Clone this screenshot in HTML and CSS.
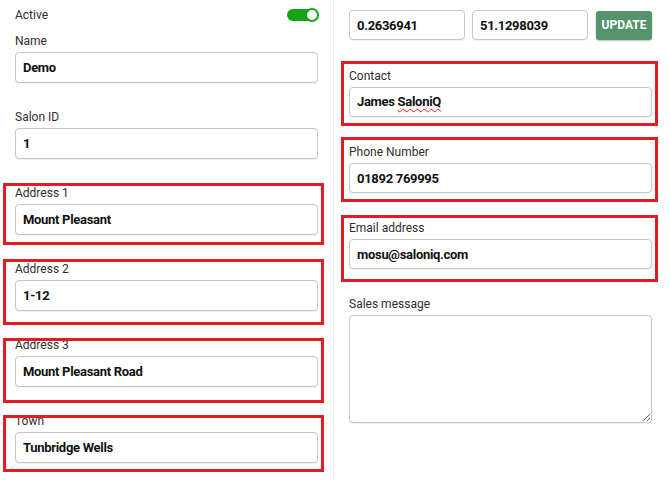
FILE: index.html
```html
<!DOCTYPE html>
<html>
<head>
    <title>Salon Details</title>
    <link rel="stylesheet" href="styles.css">
</head>
<body>
    <div class="salon-form">
        <div class="col col-left">
            <div class="active-row">
                <span class="label">Active</span>
                <span class="toggle"><span class="knob"></span></span>
            </div>

            <div class="field">
                <label>Name</label>
                <input type="text" value="Demo">
            </div>

            <div class="field">
                <label>Salon ID</label>
                <input type="text" value="1">
            </div>

            <div class="field mark mark-a1">
                <label>Address 1</label>
                <input type="text" value="Mount Pleasant">
            </div>

            <div class="field mark mark-a2">
                <label>Address 2</label>
                <input type="text" value="1-12">
            </div>

            <div class="field mark mark-a3">
                <label>Address 3</label>
                <input type="text" value="Mount Pleasant Road">
            </div>

            <div class="field mark mark-town">
                <label>Town</label>
                <input type="text" value="Tunbridge Wells">
            </div>
        </div>

        <div class="col col-right">
            <div class="coords">
                <input type="text" value="0.2636941">
                <input type="text" value="51.1298039">
                <button class="update-btn">UPDATE</button>
            </div>

            <div class="field mark mark-r mark-contact">
                <label>Contact</label>
                <div class="input">James <span class="misspelt">SaloniQ</span></div>
            </div>

            <div class="field mark mark-r mark-phone">
                <label>Phone Number</label>
                <input type="text" value="01892 769995">
            </div>

            <div class="field mark mark-r mark-email">
                <label>Email address</label>
                <input type="text" value="mosu@saloniq.com">
            </div>

            <div class="field">
                <label>Sales message</label>
                <textarea></textarea>
            </div>
        </div>
    </div>
</body>
</html>
```

FILE: styles.css
```css
body {
    margin: 0;
    background: #fff;
    font-family: Roboto, 'Liberation Sans', Arial, sans-serif;
    color: #333;
    overflow: hidden;
}
.salon-form {
    display: grid;
    grid-template-columns: 334px 1fr;
    height: 480px;
}
.col {
    box-sizing: border-box;
}
.col-left {
    padding: 8px 15px 0 15px;
    border-right: 1px solid #ececec;
}
.col-right {
    padding: 10px 18px 0 15px;
}
.active-row {
    display: flex;
    justify-content: space-between;
    align-items: center;
    height: 14px;
    margin-bottom: 12px;
}
.label, label {
    display: block;
    font-size: 12px;
    line-height: 14px;
    color: #2e2e2e;
}
label {
    margin-bottom: 4px;
}
.toggle {
    position: relative;
    width: 31px;
    height: 12px;
    border-radius: 6px;
    background: #16a316;
}
.toggle .knob {
    position: absolute;
    right: -1px;
    top: -1px;
    width: 14px;
    height: 14px;
    border-radius: 50%;
    background: #fff;
    border: 2px solid #16a316;
    box-sizing: border-box;
}
.field {
    position: relative;
    margin-bottom: 28px;
}
input, .input, textarea {
    display: block;
    width: 100%;
    height: 31px;
    box-sizing: border-box;
    padding: 0 7px;
    border: 1px solid #c6c6c6;
    border-radius: 4px;
    box-shadow: 0 1px 1px rgba(0, 0, 0, 0.06);
    background: #fff;
    font-family: Roboto, 'Liberation Sans', Arial, sans-serif;
    font-size: 13px;
    font-weight: bold;
    letter-spacing: -0.3px;
    color: #111;
    line-height: 29px;
}
.col-right input, .col-right .input {
    height: 30px;
    line-height: 28px;
}
.misspelt {
    text-decoration: underline wavy #e02020;
    text-decoration-thickness: 1px;
    text-underline-offset: 2px;
}
textarea {
    height: 108px;
    resize: vertical;
}
.coords {
    display: flex;
    align-items: center;
    gap: 7px;
    margin-bottom: 29px;
}
.coords input {
    width: 116px;
    flex: none;
}
.update-btn {
    margin-left: 1px;
    width: 56px;
    height: 29px;
    border: none;
    border-radius: 3px;
    background: #55936b;
    color: #fff;
    font-family: Roboto, 'Liberation Sans', Arial, sans-serif;
    font-size: 12px;
    font-weight: bold;
    box-shadow: 0 1px 2px rgba(0, 0, 0, 0.25);
    padding: 0;
}

/* red annotation boxes */
.mark::before {
    content: "";
    position: absolute;
    top: var(--t);
    bottom: var(--b);
    left: -12px;
    right: -6px;
    border: 3px solid #e51b23;
    z-index: 2;
    pointer-events: none;
}
.mark-r::before {
    left: -8px;
    right: -6px;
}
.col-left .field {
    margin-bottom: 27px;
}
.mark-a1 { --t: -3px; --b: -10px; }
.mark-a2 { --t: -3px; --b: -14px; }
.mark-a3 { --t: 0px; --b: -16px; }
.mark-town { --t: 1px; --b: -9px; }
.mark-contact { --t: -8px; --b: -9px; }
.mark-phone { --t: -8px; --b: -9px; }
.mark-email { --t: -6px; --b: -13px; }
```
